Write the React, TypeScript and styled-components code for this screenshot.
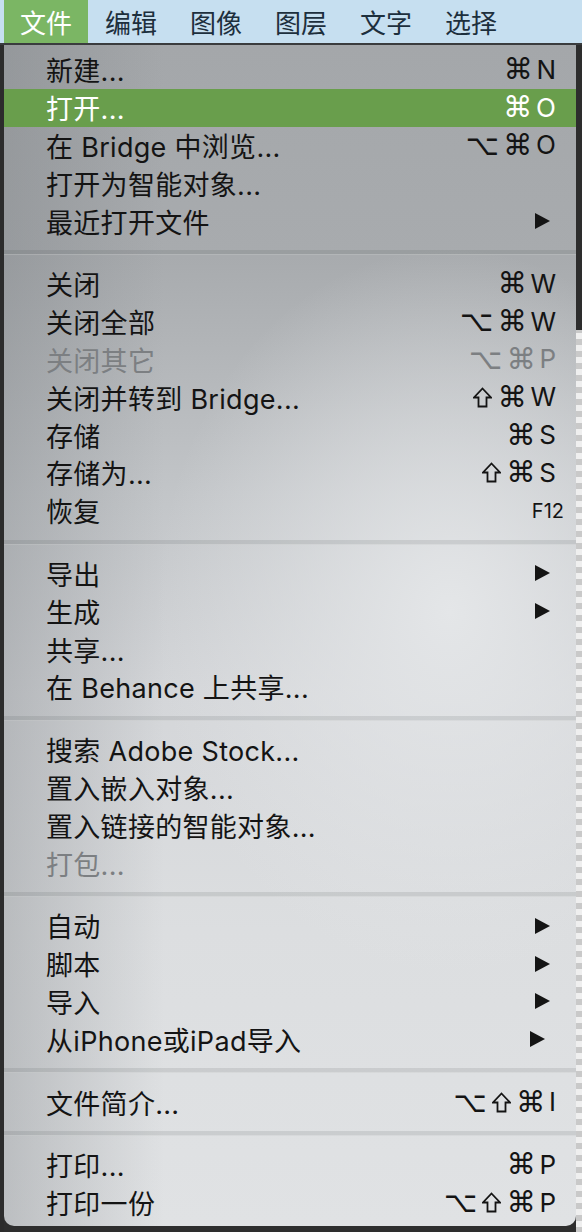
import React from "react";
import styled, { createGlobalStyle } from "styled-components";

type MenuItem = {
  label: string;
  keys?: string[];
  submenu?: boolean;
  disabled?: boolean;
  active?: boolean;
  small?: boolean;
  arrowShift?: number;
};

const groups: MenuItem[][] = [
  [
    { label: "新建...", keys: ["⌘", "N"] },
    { label: "打开...", keys: ["⌘", "O"], active: true },
    { label: "在 Bridge 中浏览...", keys: ["⌥", "⌘", "O"] },
    { label: "打开为智能对象..." },
    { label: "最近打开文件", submenu: true },
  ],
  [
    { label: "关闭", keys: ["⌘", "W"] },
    { label: "关闭全部", keys: ["⌥", "⌘", "W"] },
    { label: "关闭其它", keys: ["⌥", "⌘", "P"], disabled: true },
    { label: "关闭并转到 Bridge...", keys: ["⇧", "⌘", "W"] },
    { label: "存储", keys: ["⌘", "S"] },
    { label: "存储为...", keys: ["⇧", "⌘", "S"] },
    { label: "恢复", keys: ["F12"], small: true },
  ],
  [
    { label: "导出", submenu: true },
    { label: "生成", submenu: true },
    { label: "共享..." },
    { label: "在 Behance 上共享..." },
  ],
  [
    { label: "搜索 Adobe Stock..." },
    { label: "置入嵌入对象..." },
    { label: "置入链接的智能对象..." },
    { label: "打包...", disabled: true },
  ],
  [
    { label: "自动", submenu: true },
    { label: "脚本", submenu: true },
    { label: "导入", submenu: true },
    { label: "从iPhone或iPad导入", submenu: true, arrowShift: 5 },
  ],
  [{ label: "文件简介...", keys: ["⌥", "⇧", "⌘", "I"] }],
  [
    { label: "打印...", keys: ["⌘", "P"] },
    { label: "打印一份", keys: ["⌥", "⇧", "⌘", "P"] },
  ],
];

const menus = ["文件", "编辑", "图像", "图层", "文字", "选择"];

const GlobalStyle = createGlobalStyle`
  html, body {
    margin: 0;
    padding: 0;
    background: #2b2b2b;
  }
  * { box-sizing: border-box; }
`;

const Screen = styled.div`
  width: 582px;
  height: 1232px;
  overflow: hidden;
  display: flex;
  flex-direction: column;
  background: #2e2e2e;
  font-family: Inter, "Noto Sans CJK SC", sans-serif;
`;

const MenuBar = styled.div`
  height: 45px;
  flex-shrink: 0;
  display: flex;
  align-items: stretch;
  padding-left: 4px;
  background: #c6dff0;
  border-bottom: 2px solid #3a3c3e;
`;

const BarItem = styled.div<{ $open?: boolean }>`
  display: flex;
  align-items: center;
  padding: 0 16px;
  font-family: "Noto Sans CJK SC", sans-serif;
  font-size: 26px;
  color: ${(p) => (p.$open ? "#ffffff" : "#1d2f3d")};
  background: ${(p) => (p.$open ? "#7bb664" : "transparent")};
  margin-right: 1px;
`;

const Body = styled.div`
  flex: 1;
  display: flex;
  align-items: flex-start;
`;

const LeftEdge = styled.div`
  width: 4px;
  align-self: stretch;
  background: #2c2c2c;
`;

const Panel = styled.div`
  width: 572px;
  height: 1181px;
  padding: 6px 0 4px;
  border-radius: 0 0 10px 10px;
  background:
    linear-gradient(to right, rgba(120, 124, 128, 0.35) 0%, rgba(120, 124, 128, 0) 28%),
    radial-gradient(ellipse 420px 520px at 78% 48%, rgba(228, 230, 232, 1) 0%, rgba(228, 230, 232, 0) 70%),
    linear-gradient(to bottom, #a4a7aa 0%, #a8abae 18%, #c2c5c8 38%, #d4d6d9 55%, #dcdee0 75%, #e0e2e4 100%);
`;

const RightEdge = styled.div`
  flex: 1;
  align-self: stretch;
  background:
    linear-gradient(to bottom, #2d2d2d 0, #2d2d2d 285px, transparent 285px),
    repeating-conic-gradient(#c9c9c9 0 25%, #efefef 0 50%) 0 0 / 12px 12px;
`;

const Row = styled.div<{ $active?: boolean }>`
  height: 37.8px;
  display: flex;
  align-items: center;
  justify-content: space-between;
  padding: 0 20px 0 42px;
  background: ${(p) => (p.$active ? "#699e4c" : "transparent")};
  color: ${(p) => (p.$active ? "#ffffff" : "#141414")};
`;

const Label = styled.span<{ $disabled?: boolean }>`
  font-size: 27px;
  letter-spacing: 0.3px;
  white-space: nowrap;
  color: ${(p) => (p.$disabled ? "#7c7f82" : "inherit")};
`;

const Keys = styled.span<{ $disabled?: boolean; $small?: boolean }>`
  display: flex;
  align-items: center;
  gap: 4px;
  font-size: ${(p) => (p.$small ? "20px" : "26px")};
  color: ${(p) => (p.$disabled ? "#7c7f82" : "inherit")};
  margin-right: ${(p) => (p.$small ? "-8px" : "0")};
`;

const Glyph = styled.span<{ $symbol?: boolean }>`
  font-family: ${(p) => (p.$symbol ? '"DejaVu Sans", sans-serif' : 'Inter, sans-serif')};
  font-size: ${(p) => (p.$symbol ? "29px" : "inherit")};
  line-height: 1;
`;

const ShiftIcon = styled.svg`
  width: 19px;
  height: 21px;
  margin: 0 1px;
`;

const Arrow = styled.span<{ $shift?: number }>`
  width: 0;
  height: 0;
  border-top: 8px solid transparent;
  border-bottom: 8px solid transparent;
  border-left: 15px solid #141414;
  margin-right: ${(p) => 6 + (p.$shift ?? 0)}px;
`;

const Separator = styled.div`
  height: 25px;
  display: flex;
  align-items: center;

  &::before {
    content: "";
    flex: 1;
    height: 4px;
    background: rgba(60, 64, 68, 0.12);
    border-bottom: 1px solid rgba(255, 255, 255, 0.25);
  }
`;

const symbols = ["⌘", "⌥"];

const Shift = () => (
  <ShiftIcon viewBox="0 0 19 21" aria-label="⇧">
    <path
      d="M9.5 1.5 L18 10.5 H13.5 V19.5 H5.5 V10.5 H1 Z"
      fill="none"
      stroke="currentColor"
      strokeWidth="1.8"
      strokeLinejoin="miter"
    />
  </ShiftIcon>
);

const Row_ = ({ item }: { item: MenuItem }) => (
  <Row $active={item.active}>
    <Label $disabled={item.disabled}>{item.label}</Label>
    {item.keys && (
      <Keys $disabled={item.disabled} $small={item.small}>
        {item.keys.map((k, i) =>
          k === "⇧" ? (
            <Shift key={i} />
          ) : (
            <Glyph key={i} $symbol={symbols.includes(k)}>
              {k}
            </Glyph>
          )
        )}
      </Keys>
    )}
    {item.submenu && <Arrow $shift={item.arrowShift} />}
  </Row>
);

export default function App() {
  return (
    <>
      <GlobalStyle />
      <Screen>
        <MenuBar>
          {menus.map((m, i) => (
            <BarItem key={m} $open={i === 0}>
              {m}
            </BarItem>
          ))}
        </MenuBar>
        <Body>
          <LeftEdge />
          <Panel>
            {groups.map((g, gi) => (
              <React.Fragment key={gi}>
                {gi > 0 && <Separator />}
                {g.map((item) => (
                  <Row_ key={item.label} item={item} />
                ))}
              </React.Fragment>
            ))}
          </Panel>
          <RightEdge />
        </Body>
      </Screen>
    </>
  );
}
